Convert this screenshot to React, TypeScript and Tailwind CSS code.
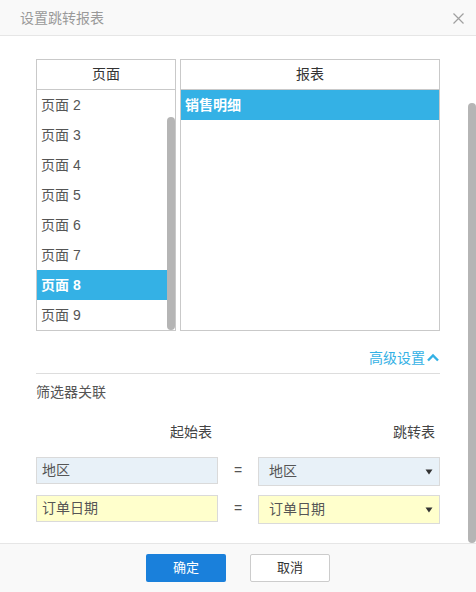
import React from "react";

const pages = ["页面 2", "页面 3", "页面 4", "页面 5", "页面 6", "页面 7", "页面 8", "页面 9"];

export default function App() {
  return (
    <div
      className="w-[476px] h-[592px] flex flex-col bg-white overflow-hidden"
      style={{ fontFamily: '"Liberation Sans", "Noto Sans CJK SC", sans-serif' }}
    >
      {/* Header */}
      <div className="h-[36px] shrink-0 bg-[#f9f9f9] border-b border-[#e6e6e6] flex items-center justify-between pl-[20px] pr-[12px]">
        <span className="text-[14px] text-[#999] leading-[20px]">设置跳转报表</span>
        <svg width="11" height="11" viewBox="0 0 11 11" className="mt-[1px]">
          <path d="M0.5 0.5L10.5 10.5M10.5 0.5L0.5 10.5" stroke="#a0a0a0" strokeWidth="1.2" fill="none" />
        </svg>
      </div>

      {/* Body */}
      <div className="flex-1 flex flex-row overflow-hidden">
        <div className="flex-1 pl-[36px] pr-[28px] pt-[23px] flex flex-col">
          {/* Lists */}
          <div className="flex flex-row gap-[4px]">
            <div className="w-[140px] h-[272px] border border-[#c9c9c9] flex flex-col">
              <div className="h-[30px] shrink-0 border-b border-[#c9c9c9] flex items-center justify-center text-[14px] text-[#333]">
                页面
              </div>
              <div className="flex-1 flex flex-row overflow-hidden">
                <div className="flex-1 flex flex-col">
                  {pages.map((p) => {
                    const sel = p === "页面 8";
                    return (
                      <div
                        key={p}
                        className={
                          sel
                            ? "h-[30px] shrink-0 flex items-center pl-[4px] text-[14px] bg-[#34b1e5] text-white font-bold"
                            : "h-[30px] shrink-0 flex items-center pl-[4px] text-[14px] text-[#555]"
                        }
                      >
                        {p}
                      </div>
                    );
                  })}
                </div>
                <div className="w-[8px] shrink-0 flex flex-col">
                  <div className="mt-[27px] flex-1 rounded-full bg-[#b5b5b5]" />
                </div>
              </div>
            </div>
            <div className="w-[260px] h-[272px] border border-[#c9c9c9] flex flex-col">
              <div className="h-[30px] shrink-0 border-b border-[#c9c9c9] flex items-center justify-center text-[14px] text-[#333]">
                报表
              </div>
              <div className="h-[30px] shrink-0 flex items-center pl-[4px] text-[14px] bg-[#34b1e5] text-white font-bold">
                销售明细
              </div>
            </div>
          </div>

          {/* Advanced */}
          <div className="h-[43px] shrink-0 border-b border-[#dddddd] flex flex-row items-end justify-end pb-[5px]">
            <span className="text-[14px] leading-[20px] text-[#34b1e5]">高级设置</span>
            <svg width="14" height="9" viewBox="0 0 14 9" className="mb-[6px] ml-[1px]">
              <path d="M2 7.5L7 2.5L12 7.5" stroke="#34b1e5" strokeWidth="2.4" fill="none" />
            </svg>
          </div>

          <div className="mt-[8px] text-[14px] leading-[20px] text-[#555]">筛选器关联</div>

          {/* Filter grid */}
          <div className="mt-[20px] grid grid-cols-[182px_40px_182px] text-[14px] leading-[20px] text-[#444]">
            <div className="text-right pr-[6px]">起始表</div>
            <div />
            <div className="text-right pr-[5px]">跳转表</div>
          </div>

          <div className="mt-[15px] grid grid-cols-[182px_40px_182px] items-start">
            <div className="h-[27px] border border-[#dadada] bg-[#e8f1f8] flex items-center pl-[5px] text-[14px] text-[#555]">
              地区
            </div>
            <div className="h-[27px] flex items-center justify-center text-[14px] text-[#555]">=</div>
            <div className="h-[29px] border border-[#dadada] bg-[#e8f1f8] flex items-center justify-between pl-[10px] pr-[6px] text-[14px] text-[#555]">
              <span>地区</span>
              <svg width="8" height="6" viewBox="0 0 8 6">
                <path d="M0.5 0.5H7.5L4 5.5Z" fill="#333" />
              </svg>
            </div>
          </div>

          <div className="mt-[9px] grid grid-cols-[182px_40px_182px] items-start">
            <div className="h-[27px] border border-[#dadada] bg-[#ffffcc] flex items-center pl-[5px] text-[14px] text-[#555]">
              订单日期
            </div>
            <div className="h-[27px] flex items-center justify-center text-[14px] text-[#555]">=</div>
            <div className="h-[29px] border border-[#dadada] bg-[#ffffcc] flex items-center justify-between pl-[10px] pr-[6px] text-[14px] text-[#555]">
              <span>订单日期</span>
              <svg width="8" height="6" viewBox="0 0 8 6">
                <path d="M0.5 0.5H7.5L4 5.5Z" fill="#333" />
              </svg>
            </div>
          </div>
        </div>

        {/* Body scrollbar */}
        <div className="w-[8px] shrink-0 flex flex-col">
          <div className="mt-[67px] flex-1 rounded-full bg-[#b5b5b5]" />
        </div>
      </div>

      {/* Footer */}
      <div className="h-[49px] shrink-0 border-t border-[#e6e6e6] bg-[#f9f9f9] flex flex-row justify-center items-start pt-[10px] gap-[24px]">
        <button className="w-[80px] h-[28px] rounded-[2px] bg-[#1a80db] text-white text-[13px]">确定</button>
        <button className="w-[80px] h-[28px] rounded-[2px] bg-white border border-[#cccccc] text-[#333] text-[13px]">
          取消
        </button>
      </div>
    </div>
  );
}
